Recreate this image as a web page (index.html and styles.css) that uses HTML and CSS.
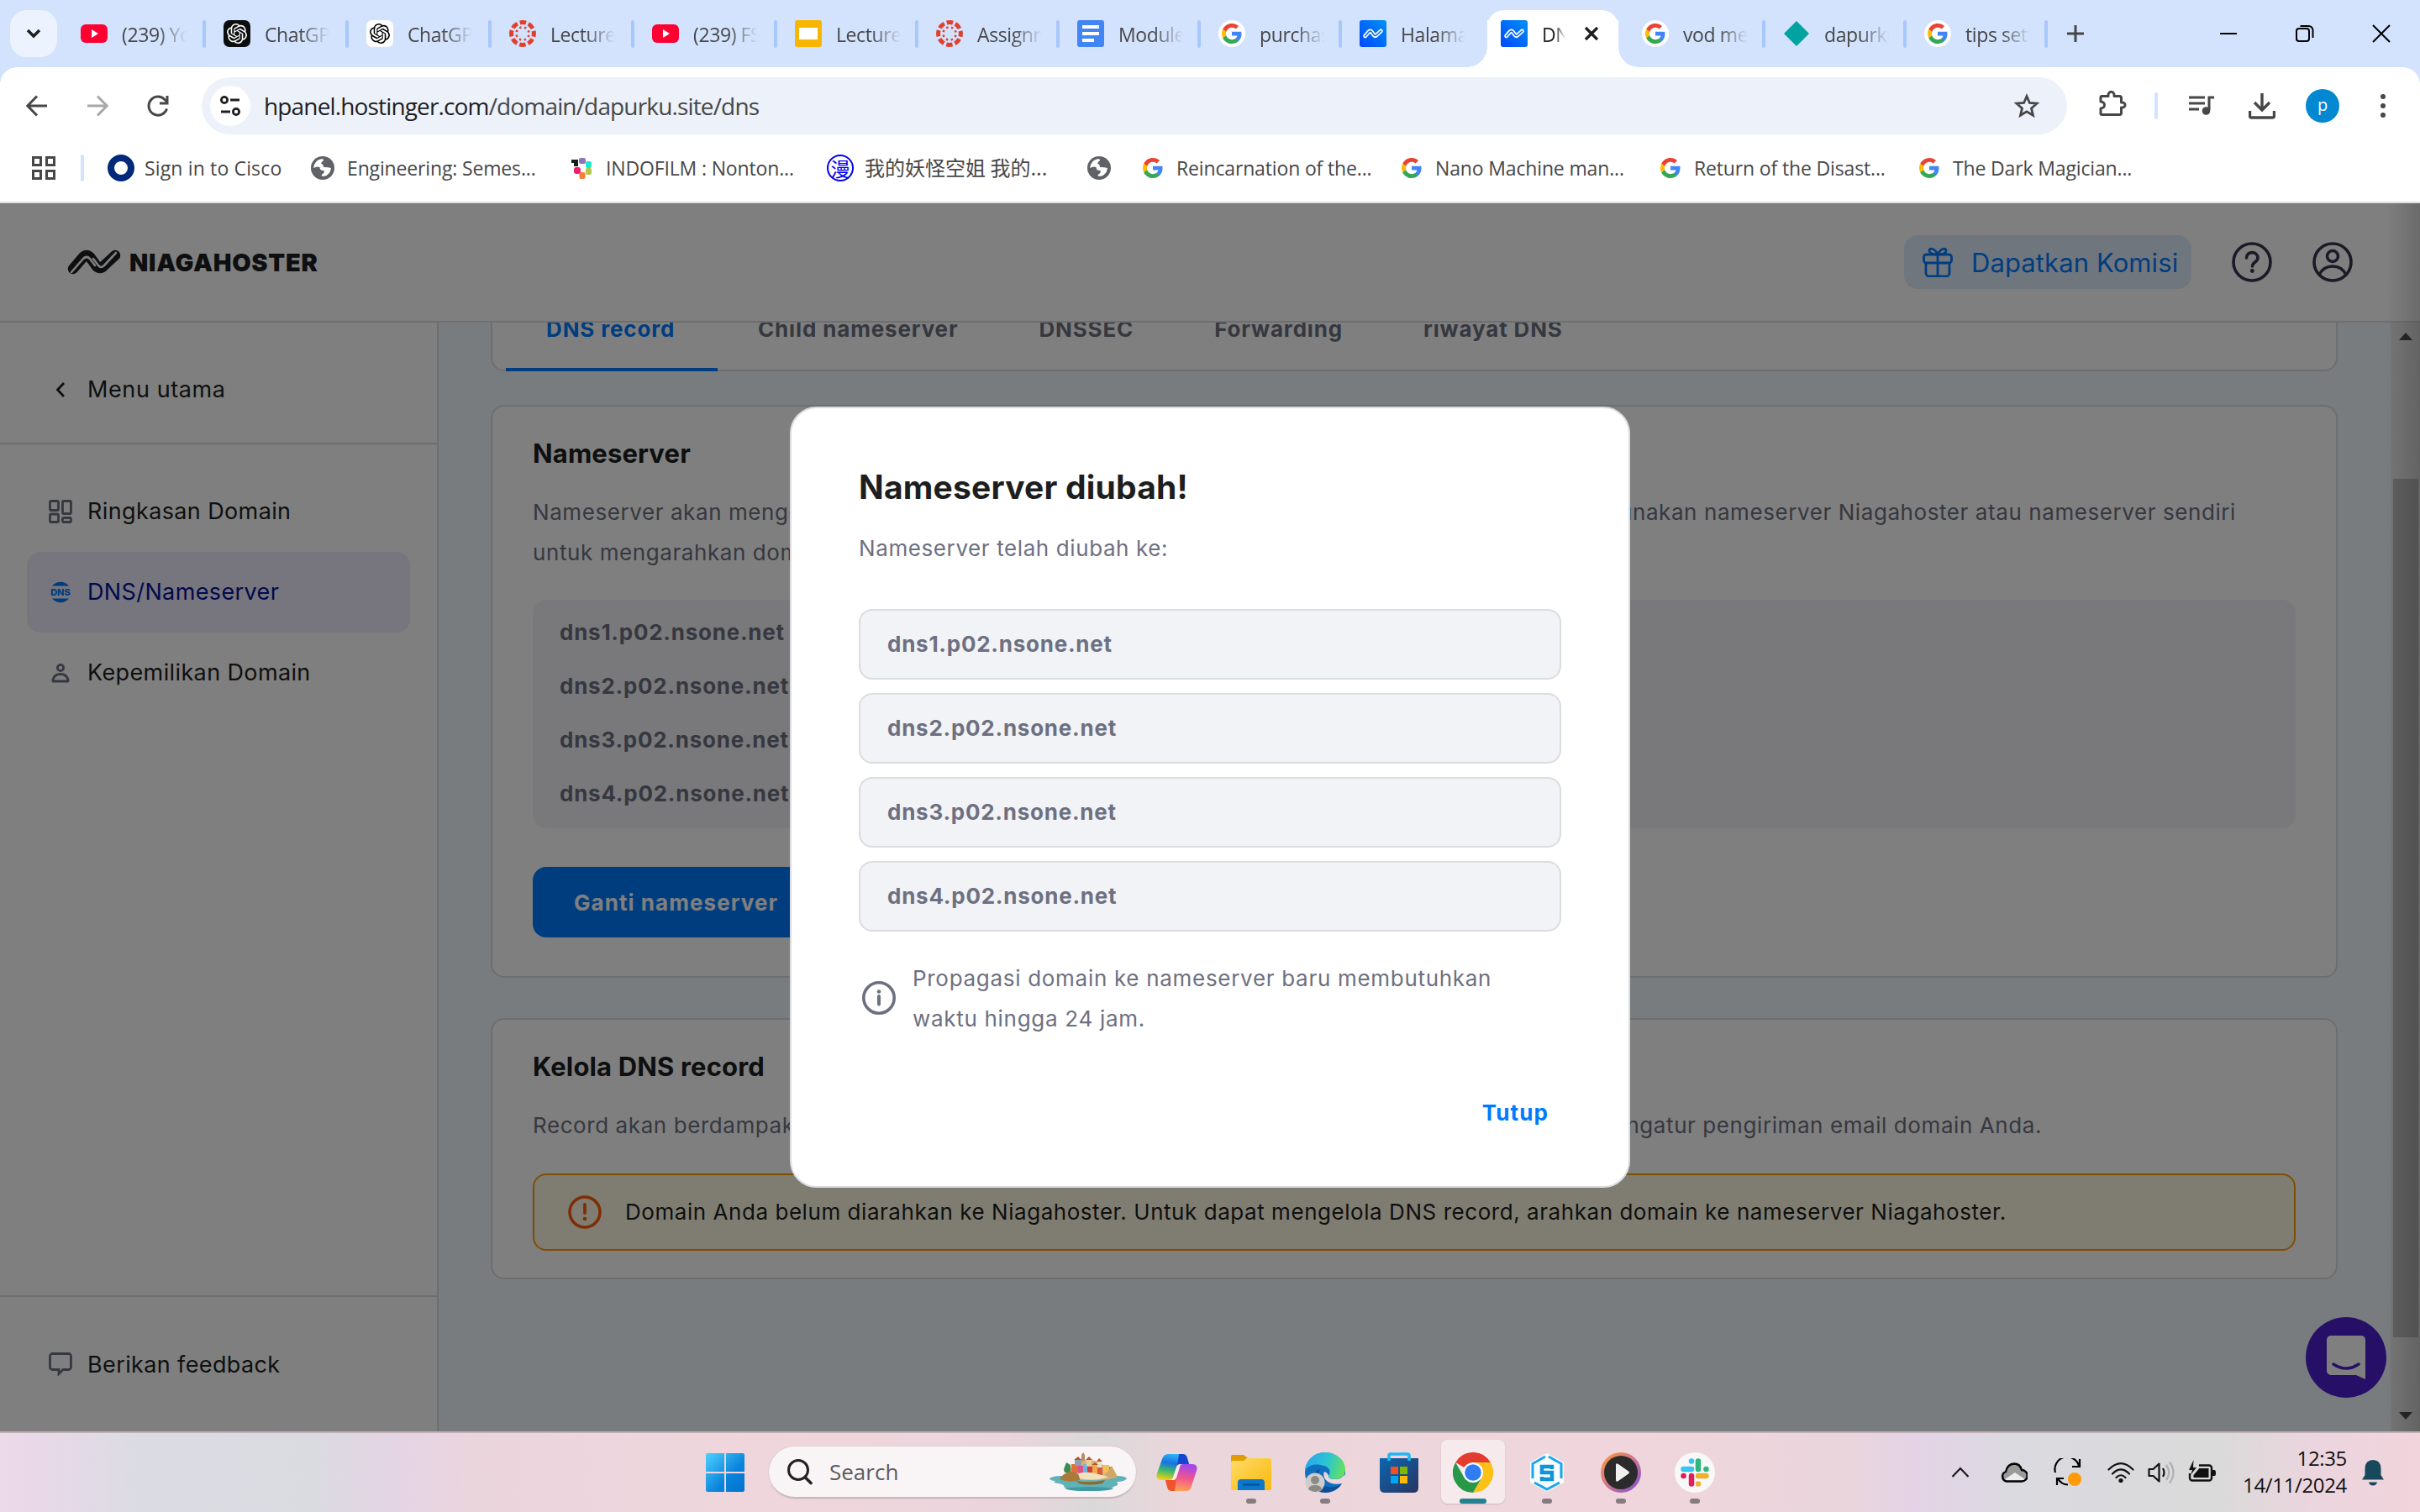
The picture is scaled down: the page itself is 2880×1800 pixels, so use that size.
FILE: index.html
```html
<!DOCTYPE html>
<html lang="id">
<head>
<meta charset="utf-8">
<title>DNS / Nameserver - Niagahoster</title>
<link rel="stylesheet" href="styles.css">
</head>
<body>
<svg class="sprite" aria-hidden="true">
  <defs>
    <linearGradient id="nh-blue" x1="0" y1="1" x2="1" y2="0"><stop offset="0" stop-color="#0048ff"/><stop offset="1" stop-color="#0090f5"/></linearGradient>
    <symbol id="i-youtube" viewBox="0 0 32 32"><rect y="5" width="32" height="22" rx="6" fill="#ff0033"/><path d="M13 11l8 5-8 5z" fill="#fff"/></symbol>
    <symbol id="i-knot" viewBox="0 0 24 24"><path fill="currentColor" d="M22.2819 9.8211a5.9847 5.9847 0 0 0-.5157-4.9108 6.0462 6.0462 0 0 0-6.5098-2.9A6.0651 6.0651 0 0 0 4.9807 4.1818a5.9847 5.9847 0 0 0-3.9977 2.9 6.0462 6.0462 0 0 0 .7427 7.0966 5.98 5.98 0 0 0 .511 4.9107 6.051 6.051 0 0 0 6.5146 2.9001A5.9847 5.9847 0 0 0 13.2599 24a6.0557 6.0557 0 0 0 5.7718-4.2058 5.9894 5.9894 0 0 0 3.9977-2.9001 6.0557 6.0557 0 0 0-.7475-7.0729zm-9.022 12.6081a4.4755 4.4755 0 0 1-2.8764-1.0408l.1419-.0804 4.7783-2.7582a.7948.7948 0 0 0 .3927-.6813v-6.7369l2.02 1.1686a.071.071 0 0 1 .038.052v5.5826a4.504 4.504 0 0 1-4.4945 4.4944zm-9.6607-4.1254a4.4708 4.4708 0 0 1-.5346-3.0137l.142.0852 4.783 2.7582a.7712.7712 0 0 0 .7806 0l5.8428-3.3685v2.3324a.0804.0804 0 0 1-.0332.0615L9.74 19.9502a4.4992 4.4992 0 0 1-6.1408-1.6464zM2.3408 7.8956a4.485 4.485 0 0 1 2.3655-1.9728V11.6a.7664.7664 0 0 0 .3879.6765l5.8144 3.3543-2.0201 1.1685a.0757.0757 0 0 1-.071 0l-4.8303-2.7865A4.504 4.504 0 0 1 2.3408 7.872zm16.5963 3.8558L13.1038 8.364 15.1192 7.2a.0757.0757 0 0 1 .071 0l4.8303 2.7913a4.4944 4.4944 0 0 1-.6765 8.1042v-5.6772a.79.79 0 0 0-.407-.667zm2.0107-3.0231l-.142-.0852-4.7735-2.7818a.7759.7759 0 0 0-.7854 0L9.409 9.2297V6.8974a.0662.0662 0 0 1 .0284-.0615l4.8303-2.7866a4.4992 4.4992 0 0 1 6.6802 4.66zM8.3065 12.863l-2.02-1.1638a.0804.0804 0 0 1-.038-.0567V6.0742a4.4992 4.4992 0 0 1 7.3757-3.4537l-.142.0805L8.704 5.459a.7948.7948 0 0 0-.3927.6813zm1.0976-2.3654l2.602-1.4998 2.6069 1.4998v2.9994l-2.5974 1.4997-2.6067-1.4997Z"/></symbol>
    <symbol id="i-gpt-dark" viewBox="0 0 32 32"><rect width="32" height="32" rx="7" fill="#0c0d0d"/><svg x="4" y="4" width="24" height="24" color="#fff"><use href="#i-knot"/></svg></symbol>
    <symbol id="i-gpt-light" viewBox="0 0 32 32"><rect width="32" height="32" rx="7" fill="#fff"/><svg x="4" y="4" width="24" height="24" color="#000"><use href="#i-knot"/></svg></symbol>
    <symbol id="i-canvas" viewBox="0 0 32 32"><g fill="none" stroke="#e13f2b"><circle cx="16" cy="16" r="13.4" stroke-width="5" stroke-dasharray="7.5 3.02" stroke-dashoffset="3.75"/><circle cx="16" cy="16" r="7.6" stroke-width="2.6" stroke-dasharray="2.4 3.57" stroke-dashoffset="4.2"/></g></symbol>
    <symbol id="i-slides" viewBox="0 0 32 32"><rect width="32" height="32" rx="3" fill="#f8b600"/><rect x="5" y="9" width="22" height="14" fill="#fff"/></symbol>
    <symbol id="i-docs" viewBox="0 0 32 32"><rect width="32" height="32" rx="3" fill="#4285f4"/><path d="M6 6h20v4H6zM6 14h20v4H6zM6 22h14v4H6z" fill="#fff"/></symbol>
    <symbol id="i-g" viewBox="1 1 22 22"><path fill="#4285F4" d="M22.56 12.25c0-.78-.07-1.53-.2-2.25H12v4.26h5.92c-.26 1.37-1.04 2.53-2.21 3.31v2.77h3.57c2.08-1.92 3.28-4.74 3.28-8.09z"/><path fill="#34A853" d="M12 23c2.97 0 5.46-.98 7.28-2.66l-3.57-2.77c-.98.66-2.23 1.06-3.71 1.06-2.86 0-5.29-1.93-6.16-4.53H2.18v2.84C3.99 20.53 7.7 23 12 23z"/><path fill="#FBBC05" d="M5.84 14.09c-.22-.66-.35-1.36-.35-2.09s.13-1.43.35-2.09V7.07H2.18C1.43 8.55 1 10.22 1 12s.43 3.45 1.18 4.93l3.66-2.84z"/><path fill="#EA4335" d="M12 5.38c1.62 0 3.06.56 4.21 1.64l3.15-3.15C17.45 2.09 14.97 1 12 1 7.7 1 3.99 3.47 2.18 7.07l3.66 2.84c.87-2.6 3.3-4.53 6.16-4.53z"/></symbol>
    <symbol id="i-google" viewBox="0 0 32 32"><circle cx="16" cy="16" r="16" fill="#fff"/><svg x="4" y="4" width="24" height="24"><use href="#i-g"/></svg></symbol>
    <symbol id="i-niaga" viewBox="0 0 32 32"><rect width="32" height="32" rx="3" fill="url(#nh-blue)"/><g transform="translate(4 10.300) scale(.375)" fill="none" stroke-linecap="round" stroke-linejoin="round"><path d="M7 23 19 9q4-4 8 0l8 11q4 4 8 0L57 7" stroke="#fff" stroke-width="13"/><path d="M7 23 19 9q4-4 8 0l8 11q4 4 8 0L57 7" stroke="#0069fa" stroke-width="4"/></g></symbol>
    <symbol id="i-diamond" viewBox="0 0 32 32"><path d="M16 1 31 16 16 31 1 16z" fill="#00a3a0"/></symbol>
    <symbol id="i-globe" viewBox="0 0 28 28"><circle cx="14" cy="14" r="14" fill="#5f6368"/><path d="M3 14q1-8 8-10.500 5-1 4 1.500-2 1-3 3.500 3 1 3 4.500 6 0 9 1-1 8-8 9.800-5 .5-2.500-2.600 3-1 2-4.200-5 .5-5-4-3-1.500-7.500 1z" fill="#fff"/><path d="M3 14q3 1 5 4.500 3 1 2 5Q3.500 21 3 14z" fill="#5f6368"/></symbol>
    <symbol id="i-smile-doc" viewBox="0 0 48 52"><path d="M6 0h36a5 5 0 0 1 5 5v47l-11-5H6a5 5 0 0 1-5-5V5a5 5 0 0 1 5-5z" fill="#fff"/><path d="M9 34q15 10 30 0" fill="none" stroke="#4c20cf" stroke-width="3.500" stroke-linecap="round"/></symbol>
  </defs>
</svg>

<header class="browser">
  <div class="tabstrip">
    <button class="tab-search" aria-label="Cari tab"><svg width="18" height="12" viewBox="0 0 18 12"><path d="M2 2l7 7 7-7" fill="none" stroke="#1f1f1f" stroke-width="3.500"/></svg></button>
    <div class="tabs">
      <div class="tab"><svg class="fav"><use href="#i-youtube"/></svg><span>(239) You</span></div>
      <div class="tab"><svg class="fav"><use href="#i-gpt-dark"/></svg><span>ChatGPT</span></div>
      <div class="tab"><svg class="fav"><use href="#i-gpt-light"/></svg><span>ChatGPT</span></div>
      <div class="tab"><svg class="fav"><use href="#i-canvas"/></svg><span>Lecture</span></div>
      <div class="tab"><svg class="fav"><use href="#i-youtube"/></svg><span>(239) FSO</span></div>
      <div class="tab slim"><svg class="fav"><use href="#i-slides"/></svg><span>Lecture</span></div>
      <div class="tab slim"><svg class="fav"><use href="#i-canvas"/></svg><span>Assignm</span></div>
      <div class="tab slim"><svg class="fav"><use href="#i-docs"/></svg><span>Module</span></div>
      <div class="tab slim"><svg class="fav"><use href="#i-google"/></svg><span>purchas</span></div>
      <div class="tab slim last"><svg class="fav"><use href="#i-niaga"/></svg><span>Halama</span></div>
      <div class="tab slim active"><svg class="fav"><use href="#i-niaga"/></svg><span>DNS</span><svg class="close" width="18" height="18" viewBox="0 0 18 18"><path d="M2 2l14 14M16 2 2 16" stroke="#1f1f1f" stroke-width="3.200"/></svg></div>
      <div class="tab slim"><svg class="fav"><use href="#i-google"/></svg><span>vod mem</span></div>
      <div class="tab slim"><svg class="fav"><use href="#i-diamond"/></svg><span>dapurku</span></div>
      <div class="tab slim"><svg class="fav"><use href="#i-google"/></svg><span>tips sett</span></div>
    </div>
    <svg class="new-tab" width="22" height="22" viewBox="0 0 22 22"><path d="M11 1v20M1 11h20" stroke="#474747" stroke-width="3"/></svg>
    <div class="window-buttons">
      <svg viewBox="0 0 24 24"><path d="M2 12h20" stroke="#000" stroke-width="2"/></svg>
      <svg viewBox="0 0 24 24"><rect x="2" y="6" width="15" height="15" rx="3" fill="none" stroke="#000" stroke-width="2"/><path d="M6.500 3h10a5 5 0 0 1 5 5v9" fill="none" stroke="#000" stroke-width="2"/></svg>
      <svg viewBox="0 0 24 24"><path d="M2 2l20 20M22 2 2 22" stroke="#000" stroke-width="2"/></svg>
    </div>
  </div>

  <div class="toolbar">
    <div class="nav">
      <svg viewBox="0 0 32 32"><path d="M28 16H5M16 4.500 4.800 16 16 27.500" fill="none" stroke="#474747" stroke-width="3"/></svg>
      <svg viewBox="0 0 32 32"><path d="M4 16h23M16 4.500 27.200 16 16 27.500" fill="none" stroke="#a8a8a8" stroke-width="3"/></svg>
      <svg viewBox="0 0 32 32"><path d="M26.500 19.500A11 11 0 1 1 24 8.500l3 3" fill="none" stroke="#474747" stroke-width="3"/><path d="M27 4v9h-9" fill="none" stroke="#474747" stroke-width="3"/></svg>
    </div>
    <div class="omnibox">
      <span class="site-info"><svg width="26" height="26" viewBox="0 0 26 26"><g fill="none" stroke="#1f1f1f" stroke-width="2.800"><circle cx="6" cy="6" r="3.600"/><path d="M13 6h11M2 20h11"/><circle cx="20" cy="20" r="3.600"/></g></svg></span>
      <p class="url"><b>hpanel.hostinger.com</b>/domain/dapurku.site/dns</p>
      <svg class="star" width="32" height="32" viewBox="0 0 32 32"><path d="M16 4.500l3.400 8 8.600.700-6.500 5.700 2 8.400L16 22.800l-7.500 4.500 2-8.400L4 13.200l8.600-.7z" fill="none" stroke="#474747" stroke-width="2.800"/></svg>
    </div>
    <div class="tools">
      <svg class="ext" viewBox="0 0 36 36"><path d="M6.500 9.500h7.500c-1-7 8-7 7 0h6.500a2 2 0 0 1 2 2V17c6-1 6 7 0 6v6.500a2 2 0 0 1-2 2H6.500a1.500 1.500 0 0 1-1.500-1.500V24c6 0 6-8 0-8v-5a1.500 1.500 0 0 1 1.500-1.500z" fill="none" stroke="#474747" stroke-width="3" stroke-linejoin="round"/></svg>
      <i class="rule"></i>
      <span><svg viewBox="0 0 32 32"><path d="M1 6h19M1 13h19M1 20h12" stroke="#474747" stroke-width="3"/><path d="M31 6h-6v15" fill="none" stroke="#474747" stroke-width="3"/><circle cx="21.500" cy="22" r="4.800" fill="#474747"/></svg></span>
      <span><svg viewBox="0 0 32 32"><path d="M16 1v19M7 12l9 9 9-9M1.500 22v6a2 2 0 0 0 2 2h25a2 2 0 0 0 2-2v-6" fill="none" stroke="#474747" stroke-width="3.400"/></svg></span>
      <span><b class="avatar">p</b></span>
      <span><svg viewBox="0 0 32 32"><g fill="#474747"><circle cx="16" cy="5" r="3"/><circle cx="16" cy="16" r="3"/><circle cx="16" cy="27" r="3"/></g></svg></span>
    </div>
  </div>

  <nav class="bookmarks">
    <svg class="apps" viewBox="0 0 28 28"><path d="M1.500 1.500h9v9h-9zM17.500 1.500h9v9h-9zM1.500 17.500h9v9h-9zM17.500 17.500h9v9h-9z" fill="none" stroke="#474747" stroke-width="3"/></svg>
    <i class="rule"></i>
    <a class="bm cisco"><svg class="i32" viewBox="0 0 32 32"><circle cx="16" cy="16" r="12" fill="#fff" stroke="#00297a" stroke-width="8"/></svg><span>Sign in to Cisco</span></a>
    <a class="bm"><svg class="i28"><use href="#i-globe"/></svg><span>Engineering: Semes...</span></a>
    <a class="bm"><svg class="i28" viewBox="0 0 28 28"><path d="M2 4h8v8H5V8H2z" fill="#1b1b1b"/><rect x="11" y="2" width="8" height="7" rx="2" fill="#8e75b5"/><rect x="19" y="6" width="7" height="8" rx="2" fill="#22e6cf"/><rect x="5" y="13" width="8" height="8" rx="3" fill="#ef1c72"/><rect x="19" y="14" width="7" height="8" rx="2" fill="#b3c846"/><rect x="11.500" y="19" width="7" height="8" rx="2" fill="#fb7b38"/></svg><span>INDOFILM : Nonton...</span></a>
    <a class="bm"><b class="man i32">漫</b><span class="cjk">我的妖怪空姐 我的...</span></a>
    <a class="bm"><svg class="i28"><use href="#i-globe"/></svg></a>
    <a class="bm"><svg class="i24"><use href="#i-g"/></svg><span>Reincarnation of the...</span></a>
    <a class="bm"><svg class="i24"><use href="#i-g"/></svg><span>Nano Machine man...</span></a>
    <a class="bm"><svg class="i24"><use href="#i-g"/></svg><span>Return of the Disast...</span></a>
    <a class="bm"><svg class="i24"><use href="#i-g"/></svg><span>The Dark Magician...</span></a>
  </nav>
</header>

<div class="page">
  <div class="topbar">
    <div class="brand">
      <svg width="64" height="30" viewBox="0 0 64 30"><g fill="none" stroke-linecap="round" stroke-linejoin="round"><path d="M7 23 19 9q4-4 8 0l8 11q4 4 8 0L57 7" stroke="#1d1e20" stroke-width="12.500"/><path d="M5 27 19 11q4-4 8 0l6 8M31 11l6 8q3 4 7 0L58 4" stroke="#fff" stroke-width="2.600"/></g></svg>
      <span>NIAGAHOSTER</span>
    </div>
    <div class="account">
      <a class="komisi"><svg width="36" height="36" viewBox="0 0 36 36"><g fill="none" stroke="#007bff" stroke-width="2.800"><rect x="1.500" y="9" width="33" height="10" rx="3"/><path d="M4 19v12a4 4 0 0 0 4 4h20a4 4 0 0 0 4-4V19M18 9v26M18 9C14 9 8 8 8 4.500S14 .5 18 9c4-8.500 10-8 10-4.500S22 9 18 9z"/></g></svg><span>Dapatkan Komisi</span></a>
      <svg class="round" viewBox="0 0 48 48"><circle cx="24" cy="24" r="22" fill="none" stroke="#36344d" stroke-width="3.600"/><path d="M17.500 19c0-9 13.500-8 13.500 0 0 5-6.500 5-6.500 10" fill="none" stroke="#36344d" stroke-width="3.600" stroke-linecap="round"/><circle cx="24.300" cy="34.500" r="2.400" fill="#36344d"/></svg>
      <svg class="round" viewBox="0 0 48 48"><g fill="none" stroke="#36344d" stroke-width="3.600"><circle cx="24" cy="24" r="22"/><circle cx="24" cy="17" r="6.500"/><path d="M8 39q5-10 16-10t16 10"/></g></svg>
    </div>
  </div>

  <div class="body">
    <aside class="sidebar">
      <a class="back"><svg width="16" height="20" viewBox="0 0 16 20"><path d="M12 2 4.500 10 12 18" fill="none" stroke="#1d1e20" stroke-width="2.800"/></svg><span>Menu utama</span></a>
      <nav class="menu">
        <a><svg viewBox="0 0 28 28"><g fill="none" stroke="#6d7081" stroke-width="2.800"><rect x="1.500" y="1.500" width="10" height="11" rx="1.500"/><rect x="16.500" y="1.500" width="10" height="15" rx="1.500"/><rect x="1.500" y="17" width="10" height="9.500" rx="1.500"/><rect x="16.500" y="21.500" width="10" height="5" rx="1.500"/></g></svg><span>Ringkasan Domain</span></a>
        <a class="current"><svg viewBox="0 0 28 28"><path d="M4 6.500a13 13 0 0 1 20 0zM4 21.500a13 13 0 0 0 20 0z" fill="#007bff"/><text x="14" y="18.300" text-anchor="middle" class="dns-glyph">DNS</text></svg><span>DNS/Nameserver</span></a>
        <a><svg viewBox="0 0 28 28"><g fill="none" stroke="#6d7081" stroke-width="2.800"><circle cx="14" cy="8" r="3.600"/><path d="M5 24v-2q2-6.500 9-6.500t9 6.500v2z" stroke-linejoin="round"/></g></svg><span>Kepemilikan Domain</span></a>
      </nav>
      <a class="feedback"><svg viewBox="0 0 28 28"><path d="M4.500 1.500h19a3 3 0 0 1 3 3v13a3 3 0 0 1-3 3H17l-5 5v-5H4.500a3 3 0 0 1-3-3v-13a3 3 0 0 1 3-3z" fill="none" stroke="#6d7081" stroke-width="2.800"/></svg><span>Berikan feedback</span></a>
    </aside>

    <main class="content">
      <div class="card subtabs">
        <a class="on">DNS record</a><a>Child nameserver</a><a>DNSSEC</a><a>Forwarding</a><a>riwayat DNS</a>
      </div>

      <section class="card ns">
        <h2>Nameserver</h2>
        <div class="para">
          <p class="spread"><span>Nameserver akan mengelola arah domain.</span><span>Anda dapat menggunakan nameserver Niagahoster atau nameserver sendiri</span></p>
          <p>untuk mengarahkan domain Anda.</p>
        </div>
        <ul class="ns-list"><li>dns1.p02.nsone.net</li><li>dns2.p02.nsone.net</li><li>dns3.p02.nsone.net</li><li>dns4.p02.nsone.net</li></ul>
        <button class="primary">Ganti nameserver</button>
      </section>

      <section class="card records">
        <h2>Kelola DNS record</h2>
        <div class="para one"><p class="spread"><span>Record akan berdampak pada cara kerja domain, misalnya</span><span>mengatur pengiriman email domain Anda.</span></p></div>
        <div class="alert"><svg width="40" height="40" viewBox="0 0 40 40"><circle cx="20" cy="20" r="18" fill="none" stroke="#fc5b0a" stroke-width="3.600"/><path d="M20 11v10" stroke="#fc5b0a" stroke-width="3.800" stroke-linecap="round"/><circle cx="20" cy="28" r="2.300" fill="#fc5b0a"/></svg><p>Domain Anda belum diarahkan ke Niagahoster. Untuk dapat mengelola DNS record, arahkan domain ke nameserver Niagahoster.</p></div>
      </section>
    </main>

    <div class="scrollbar">
      <svg width="16" height="9" viewBox="0 0 16 9"><path d="M8 0l8 9H0z" fill="#505050"/></svg>
      <i class="thumb"></i>
      <svg width="16" height="9" viewBox="0 0 16 9"><path d="M8 9l8-9H0z" fill="#505050"/></svg>
    </div>
  </div>

  <div class="chat"><svg width="48" height="52"><use href="#i-smile-doc"/></svg></div>

  <div class="overlay">
    <div class="modal">
      <h1>Nameserver diubah!</h1>
      <p class="sub">Nameserver telah diubah ke:</p>
      <ul class="fields"><li>dns1.p02.nsone.net</li><li>dns2.p02.nsone.net</li><li>dns3.p02.nsone.net</li><li>dns4.p02.nsone.net</li></ul>
      <div class="note"><svg width="48" height="48" viewBox="0 0 48 48"><circle cx="24" cy="24" r="18.200" fill="none" stroke="#6d7081" stroke-width="3.600"/><path d="M24 22v9.500" stroke="#6d7081" stroke-width="4" stroke-linecap="round"/><circle cx="24" cy="16.500" r="2.300" fill="#6d7081"/></svg><p>Propagasi domain ke nameserver baru membutuhkan<br>waktu hingga 24 jam.</p></div>
      <div class="actions"><button class="text-button">Tutup</button></div>
    </div>
  </div>
</div>

<footer class="taskbar">
  <div class="dock">
    <svg class="win" width="46" height="46" viewBox="0 0 46 46"><defs><linearGradient id="w11" x1="0" y1="0" x2="1" y2="1"><stop offset="0" stop-color="#4fd0ff"/><stop offset=".6" stop-color="#0a84dc"/><stop offset="1" stop-color="#0073d0"/></linearGradient></defs><path d="M2 0h20v22H0V2a2 2 0 0 1 2-2zM24 0h20a2 2 0 0 1 2 2v20H24zM0 24h22v22H2a2 2 0 0 1-2-2zM24 24h22v20a2 2 0 0 1-2 2H24z" fill="url(#w11)"/></svg>
    <div class="search">
      <svg width="32" height="32" viewBox="0 0 32 32"><circle cx="14" cy="14" r="11.500" fill="none" stroke="#222" stroke-width="3"/><path d="M22 22.500l7 7" stroke="#222" stroke-width="3.600" stroke-linecap="round"/></svg>
      <span>Search</span>
      <svg class="isle" width="92" height="46" viewBox="0 0 92 46"><path d="M0 31q4-3 14-3h66q10 0 12 3-2 4-12 4 4 4-4 6-3 5-28 5t-31-5q2-2-6-4-8-1-4-3-6 0-7-3z" fill="#5fb3b8"/><path d="M18 43q28-4 58 0-3 3-28 3t-30-3z" fill="#3f98a2"/><path d="M20 29q-2-8 8-13 8-8 18-7 14 0 19 8 6-2 8 4 6 3 7 9-16 4-32 3-20 1-28-4z" fill="#d9b47a"/><path d="M17 20l3-8 5 3v9h-7zM70 20q2-6 4 0v4h-5z" fill="#3e8a50"/><rect x="26" y="14" width="8" height="10" fill="#e0703c"/><rect x="30" y="8" width="8" height="8" fill="#8d9fb0"/><rect x="34" y="16" width="6" height="9" fill="#d8538b"/><rect x="40" y="14" width="5" height="12" fill="#6db6dc"/><rect x="45" y="17" width="6" height="10" fill="#cf3e3e"/><rect x="44" y="8" width="6" height="8" fill="#e9cf9f"/><rect x="51" y="14" width="6" height="12" fill="#f0a94b"/><rect x="57" y="10" width="5" height="8" fill="#e9e0d0"/><rect x="57" y="18" width="6" height="9" fill="#d85c3c"/><rect x="64" y="15" width="7" height="9" fill="#f2c057"/><path d="M38 10V3l2-3 2 3v7z" fill="#b98a63"/><path d="M29 9l5-4 4 4M43 9l4-4 4 4M50 15l4-3 4 3M56 11l3-4 4 4" fill="#b05a2c"/><path d="M12 32q5-9 16-9 9 2 8 10-12 4-24-1z" fill="#a87a3c"/><path d="M66 28l8-12 7 13q-8 4-15-1z" fill="#d2a765"/><path d="M34 25q14-3 24 1l12 3q-16 6-34 2z" fill="#f3e0bc"/><path d="M32 34q16 3 34-1l-3 4q-16 3-28 0z" fill="#93682f"/></svg>
    </div>
    <div class="app"><svg width="50" height="46" viewBox="0 0 50 46"><defs><linearGradient id="cp1" x1=".5" y1="0" x2=".3" y2="1"><stop offset="0" stop-color="#2eb4f5"/><stop offset=".35" stop-color="#1673e0"/><stop offset=".65" stop-color="#3fb96c"/><stop offset="1" stop-color="#f2d312"/></linearGradient><linearGradient id="cp2" x1=".6" y1="0" x2=".4" y2="1"><stop offset="0" stop-color="#a046f0"/><stop offset=".5" stop-color="#f0568e"/><stop offset="1" stop-color="#ffa552"/></linearGradient></defs><path d="M14 1h17q5 0 6 5l2 7H29q-4 0-5 4l-4 12q-1 3-4 3H6q-7 0-5-8L7 7q2-6 7-6z" fill="url(#cp1)"/><path d="M27 1h4q5 0 6 5l2 7H29q-3 0-4 2z" fill="#1646cf"/><path d="M36 45H19q-5 0-6-5l-2-8h9q3 0 4-3l4-13q1-3 4-3h11q7 0 5 8l-6 18q-1 6-6 6z" fill="url(#cp2)"/><path d="M22 45h-3q-5 0-6-5l-2-8h9q3 0 4-3z" fill="#f0532d"/><path d="M24 29l5-16q-4 0-5 4l-4 12q-1 3-4 3h4q3 0 4-3z" fill="#fbe9f0"/></svg></div>
    <div class="app run"><svg width="48" height="44" viewBox="0 0 48 44"><defs><linearGradient id="fo" x1="0" y1="0" x2="1" y2="1"><stop offset="0" stop-color="#ffdc66"/><stop offset="1" stop-color="#f9b80d"/></linearGradient></defs><path d="M2 1h13l5 4h-1v10H0V3q0-2 2-2z" fill="#e09d00"/><path d="M2 8h13l4-3h27q2 0 2 2v34q0 2-2 2H2q-2 0-2-2V10q0-2 2-2z" fill="url(#fo)"/><path d="M8 43V34q0-4 4-4h24q4 0 4 4v9z" fill="#0b78cc"/><path d="M14 36.500h20" stroke="#0a5195" stroke-width="2.400"/></svg></div>
    <div class="app run"><svg width="48" height="48" viewBox="0 0 48 48"><defs><linearGradient id="ed" x1="0" y1=".3" x2="1" y2=".5"><stop offset="0" stop-color="#2aa5ee"/><stop offset=".55" stop-color="#2cc6d0"/><stop offset="1" stop-color="#66e05e"/></linearGradient></defs><circle cx="24" cy="24" r="24" fill="#0f6fc0"/><path d="M0 22C1 9 11 0 24 0s24 9 24 20c0 8-6 12-13 12-5 0-8-2-7-4 3-4 2-10-5-12C14 13 4 14 0 22z" fill="url(#ed)"/><path d="M17 30c1 9 10 13 18 11 4-1 7-2 9-4-4 7-12 11-20 11-10 0-16-9-14-18 1-5 4-9 8-10-2 3-2 6-1 10z" fill="#0f4f96"/><path d="M28 28c-1 2 2 4 7 4 5 0 9-1 12-6l2 6-4 5q-14 3-21-5-3-5-1-9 4 1 5 5z" fill="#edd6dc"/><circle cx="12" cy="36" r="11.500" fill="#cfcdca"/><circle cx="12" cy="33" r="5" fill="#8c8a87"/><path d="M4 44q1-5 8-5t8 5q-8 6-16 0z" fill="#8c8a87"/></svg></div>
    <div class="app"><svg width="46" height="48" viewBox="0 0 46 48"><defs><linearGradient id="st" x1="0" y1="0" x2="1" y2="1"><stop offset="0" stop-color="#0c66b2"/><stop offset="1" stop-color="#29355f"/></linearGradient></defs><path d="M0 7h46v35q0 6-6 6H6q-6 0-6-6z" fill="url(#st)"/><path d="M11 10V4q0-2 2-2h20q2 0 2 2v6" fill="none" stroke="#1fb8f2" stroke-width="3.600"/><path d="M13 17h9v9h-9z" fill="#f25022"/><path d="M24 17h9v9h-9z" fill="#7fba00"/><path d="M13 28h9v9h-9z" fill="#00a4ef"/><path d="M24 28h9v9h-9z" fill="#ffb900"/></svg></div>
    <div class="app run focus"><svg width="48" height="48" viewBox="0 0 48 48"><path d="M24 24 3.200 12A24 24 0 0 1 44.800 12z" fill="#e33b2e"/><path d="M44.800 12A24 24 0 0 1 24 48l10.400-18L24 12z" fill="#fbc116"/><path d="M3.200 12A24 24 0 0 0 24 48l10.400-18-10.400 6-10.400-6z" fill="#279847"/><circle cx="24" cy="24" r="12" fill="#fff"/><circle cx="24" cy="24" r="9.800" fill="#2f7df0"/></svg></div>
    <div class="app run"><svg width="42" height="46" viewBox="0 0 42 46"><path d="M21 0l20 11v24L21 46 1 35V11z" fill="#f8fdff"/><path d="M19 4 4 12.500V30M23 4l15 8.500V30M6 35l15 8 15-8" fill="none" stroke="#1ba6ea" stroke-width="3"/><path d="M27 19v-3H15v7h12v8H15v-3" fill="none" stroke="#1393d8" stroke-width="4.500"/></svg></div>
    <div class="app run"><svg width="48" height="48" viewBox="0 0 48 48"><defs><linearGradient id="mp" x1="0" y1="0" x2="1" y2="1"><stop offset="0" stop-color="#ff9a33"/><stop offset=".5" stop-color="#cf7490"/><stop offset="1" stop-color="#7b4fd0"/></linearGradient></defs><circle cx="24" cy="24" r="24" fill="url(#mp)"/><circle cx="24" cy="24" r="20" fill="#2b2b2b"/><path d="M18 15q0-3 3-1l12 8.500q2 1.500 0 3L21 34q-3 2-3-1z" fill="#f0f0f0"/></svg></div>
    <div class="app run"><svg width="48" height="48" viewBox="0 0 48 48"><circle cx="24" cy="24" r="24" fill="#f8f8f8"/><g stroke-width="6.500" stroke-linecap="round"><path d="M20 10.500v.1M10.500 20h9.500" stroke="#36c5f0"/><path d="M28 10.500V20M37.500 20h-.1" stroke="#2eb67d"/><path d="M28 37.500v-.1M28 28h9.500" stroke="#ecb22e"/><path d="M20 28v9.500M10.500 28h.1" stroke="#e01e5a"/></g></svg></div>
  </div>

  <div class="tray">
    <svg class="chev" width="22" height="14" viewBox="0 0 22 14"><path d="M1.500 12 11 2l9.500 10" fill="none" stroke="#1b1b1b" stroke-width="2.200"/></svg>
    <svg class="cloud" width="32" height="24" viewBox="0 0 32 24"><path d="M7 22.500a6 6 0 0 1-1-11.500Q8 2 16 1.500q7 0 9 7.500a6.700 6.700 0 0 1 0 13.500z" fill="#9a9a9a"/><path d="M5 20l12-8 12 8-2 2.500H7z" fill="#ededed"/><path d="M7 22.500a6 6 0 0 1-1-11.500Q8 2 16 1.500q7 0 9 7.500a6.700 6.700 0 0 1 0 13.500z" fill="none" stroke="#000" stroke-width="2.400"/></svg>
    <svg class="sync" width="34" height="34" viewBox="0 0 34 34"><path d="M2 17A14.500 14.500 0 0 1 30 9M31 1v9h-9M17 31.500A14 14 0 0 1 5 24M4 32v-8h8" fill="none" stroke="#000" stroke-width="2.200"/><circle cx="25" cy="25" r="8" fill="#ff9a0a"/></svg>
    <svg class="wifi" width="32" height="26" viewBox="0 0 32 26"><g fill="none" stroke="#111" stroke-width="2.200" stroke-linecap="round"><path d="M1.500 9.500q14.500-14.500 29 0M6 14.500q10-10 20 0M10.500 19q5.500-5.500 11 0"/></g><circle cx="16" cy="22.500" r="2.600" fill="#111"/></svg>
    <svg class="vol" width="34" height="28" viewBox="0 0 34 28"><path d="M1.500 10v8h5l7 6.500v-21L6.500 10z" fill="none" stroke="#111" stroke-width="2.200" stroke-linejoin="round"/><path d="M18 9q3 5 0 10" fill="none" stroke="#111" stroke-width="2.200"/><path d="M22 5q6.500 9 0 18M26 1.500q9 12.500 0 25" fill="none" stroke="#b0b0b0" stroke-width="2.200"/></svg>
    <svg class="bat" width="34" height="28" viewBox="0 0 34 28"><path d="M13 7.500h12a3 3 0 0 1 3 3v12a3 3 0 0 1-3 3H5a3 3 0 0 1-3-3V17" fill="none" stroke="#111" stroke-width="2.400"/><path d="M13 11h11.500v11h-18V19l6-7zM29 13h2.500q1.500 0 1.500 3.500T31.500 20H29zM6.500 1 1 13h4l-2 6 7-9H6z" fill="#111"/></svg>
    <p class="clock">12:35<br>14/11/2024</p>
    <svg class="bell" width="26" height="32" viewBox="0 0 26 32"><path d="M13 1q9 0 9.500 10v8l3.500 5.500H0L3.500 19v-8Q4 1 13 1zM8 27.500h10q-1 4-5 4t-5-4z" fill="#17495c"/></svg>
  </div>
</footer>
</body>
</html>
```
FILE: styles.css
```css
* { box-sizing: border-box; margin: 0; padding: 0; }
body { width: 2880px; height: 1800px; overflow: hidden; display: flex; flex-direction: column; font-family: Inter, "Liberation Sans", sans-serif; font-size: 26px; color: #1d1e20; background: #fff; }
svg { display: block; flex: none; }
ul { list-style: none; }
button { border: 0; background: none; font: inherit; color: inherit; }
span, p, h1, h2, li, a { white-space: nowrap; }
.sprite { position: absolute; width: 0; height: 0; }

/* Browser chrome */
.browser { height: 242px; flex: none; background: #fff; border-bottom: 2px solid #dedfe0; font-family: "Open Sans", "Noto Sans CJK SC", sans-serif; color: #474747; }
.tabstrip { height: 80px; background: #d3e3fd; display: flex; align-items: center; padding-left: 12px; }
.tab-search { width: 56px; height: 56px; border-radius: 20px; background: #edf3fe; display: grid; place-items: center; margin-right: 8px; }
.tabs { display: flex; height: 80px; }
.tab { width: 170px; padding-left: 20px; display: flex; align-items: center; position: relative; }
.tab.slim { width: 168px; }
.tab .fav { width: 32px; height: 32px; }
.tab span { margin-left: 17px; padding-top: 1px; width: 77px; overflow: hidden; font-size: 23px; letter-spacing: -.4px; -webkit-mask-image: linear-gradient(90deg, #000 55%, transparent); mask-image: linear-gradient(90deg, #000 55%, transparent); }
.tab::after { content: ""; position: absolute; right: 1px; top: 24px; width: 4px; height: 33px; border-radius: 2px; background: #a8c7fa; }
.tab.last::after, .tab.active::after { display: none; }
.tab.active { color: #1f1f1f; z-index: 1; background: linear-gradient(#fff, #fff) 4px 24px / 156px 56px no-repeat; }
.tab.active::before { content: ""; position: absolute; z-index: -1; left: -20px; right: -16px; top: 56px; bottom: 0; background: radial-gradient(circle at 0 0, transparent 23.5px, #fff 24px) 0 0 / 24px 24px no-repeat, radial-gradient(circle at 100% 0, transparent 23.5px, #fff 24px) 100% 0 / 24px 24px no-repeat; }
.tab.active::after { display: block; z-index: -1; left: 4px; right: auto; top: 12px; width: 156px; height: 60px; border-radius: 20px 20px 0 0; background: #fff; }
.tab.active span { width: 28px; }
.tab.active .close { margin-left: 22px; }
.new-tab { margin-left: 21px; }
.window-buttons { margin-left: auto; display: flex; gap: 67px; padding-right: 34px; }
.window-buttons svg { width: 24px; height: 24px; }
.toolbar { height: 92px; display: flex; align-items: center; padding-left: 28px; background: radial-gradient(circle at 100% 100%, #fff 19.5px, #d3e3fd 20px) 0 0 / 20px 20px no-repeat, radial-gradient(circle at 0 100%, #fff 19.5px, #d3e3fd 20px) 100% 0 / 20px 20px no-repeat; }
.nav { display: flex; gap: 40px; }
.nav svg { width: 32px; height: 32px; }
.omnibox { margin-left: 36px; width: 2220px; height: 68px; border-radius: 34px; background: #ecf1fa; display: flex; align-items: center; padding: 0 32px 0 10px; }
.site-info { width: 48px; height: 48px; border-radius: 50%; background: #fff; display: grid; place-items: center; }
.url { margin-left: 16px; font-size: 28px; letter-spacing: -.85px; }
.url b { font-weight: 400; color: #1f1f1f; }
.star { margin-left: auto; }
.tools { display: flex; align-items: center; }
.tools span { width: 72px; display: grid; place-items: center; }
.tools span svg { width: 32px; height: 32px; }
.tools .ext { width: 36px; height: 36px; margin: -6px 33px 0 35px; }
.rule { width: 4px; height: 32px; border-radius: 2px; background: #d3e3fd; }
.tools .rule { margin-right: 16px; }
.avatar { width: 40px; height: 40px; border-radius: 50%; background: #0288d1; color: #fff; font-weight: 400; font-size: 20px; text-align: center; line-height: 37px; }
.bookmarks { height: 56px; display: grid; grid-template-columns: 58px 32px 242px 308px 306px 310px 66px 308px 308px 308px 308px; align-items: center; padding-left: 38px; font-size: 23px; letter-spacing: -.15px; }
.apps { width: 28px; height: 28px; }
.bm { display: flex; align-items: center; gap: 12px; }
.bm span { margin-top: -1px; }
.cisco { letter-spacing: .15px; }
.i32 { width: 32px; height: 32px; }
.i28 { width: 28px; height: 28px; }
.i28 + span { margin-left: 3px; }
.i24 { width: 24px; height: 24px; }
.i24 + span { margin-left: 4px; }
.man { border: 2px solid #0000f0; border-radius: 50%; color: #0000f0; font: 400 23px/27px "Noto Sans CJK SC", sans-serif; display: grid; place-items: center; }
.bm .cjk { font-family: "Noto Sans CJK SC", sans-serif; letter-spacing: 0; margin-left: 1px; font-size: 24px; margin-top: -3px; }

/* hPanel */
.page { height: 1462px; flex: none; position: relative; display: flex; flex-direction: column; background: #fff; overflow: hidden; }
.topbar { height: 142px; flex: none; border-bottom: 2px solid #dadce0; display: flex; align-items: center; justify-content: space-between; padding: 0 80px; }
.brand { display: flex; align-items: center; gap: 10px; }
.brand span { font-size: 29px; font-weight: 900; letter-spacing: .7px; padding-top: 1px; }
.account { display: flex; align-items: center; }
.komisi { width: 342px; height: 64px; border-radius: 16px; background: #e0ecfc; color: #007bff; display: flex; align-items: center; padding-left: 22px; gap: 22px; font-size: 31px; letter-spacing: .1px; margin-right: 48px; }
.round { width: 48px; height: 48px; }
.round + .round { margin-left: 48px; }
.body { flex: 1; min-height: 0; display: flex; background: #f2f9ff; }
.sidebar { width: 522px; background: #fff; border-right: 2px solid #dadce0; display: flex; flex-direction: column; font-size: 27px; letter-spacing: .38px; }
.back { height: 145px; border-bottom: 2px solid #dadce0; display: flex; align-items: center; padding: 16px 0 0 64px; gap: 24px; letter-spacing: .6px; }
.menu { padding: 32px 32px 0; }
.menu a { height: 96px; border-radius: 16px; display: flex; align-items: center; padding-left: 26px; gap: 18px; }
.menu a span { margin-top: -1px; }
.menu svg, .feedback svg { width: 28px; height: 28px; }
.menu .current { background: #eeebfb; color: #00149b; }
.dns-glyph { font: 800 11px Inter, sans-serif; letter-spacing: 0; fill: #007bff; }
.feedback { margin-top: auto; height: 162px; border-top: 2px solid #dadce0; display: flex; align-items: center; padding-left: 58px; gap: 18px; }
.content { width: 2323px; padding: 0 63px 0 62px; overflow: hidden; }
.card { background: #fff; border: 2px solid #dadce0; border-radius: 16px; }
.subtabs { height: 100px; margin-top: -42px; display: flex; padding-left: 16px; color: #6d7081; font-weight: 700; letter-spacing: .85px; }
.subtabs a { line-height: 96px; padding: 0 48px; height: 98px; }
.subtabs .on { color: #007bff; border-bottom: 4px solid #007bff; width: 252px; }
.ns { margin-top: 40px; height: 682px; padding: 32px 48px 0; }
h2 { font-size: 31px; font-weight: 700; line-height: 48px; letter-spacing: .15px; }
.para { margin-top: 22px; color: #6d7081; line-height: 48px; letter-spacing: .58px; }
.spread { display: flex; justify-content: space-between; width: 2027px; }
.para.one .spread { width: 1796px; }
.ns-list { margin-top: 32px; height: 272px; background: #f2f3f6; border-radius: 16px; padding: 7px 32px; font-weight: 700; color: #6d7081; line-height: 64px; letter-spacing: .75px; }
.primary { display: block; margin-top: 46px; height: 84px; width: 342px; border-radius: 16px; background: #007bff; color: #fff; font-weight: 700; letter-spacing: 1.05px; text-align: left; padding-left: 49px; }
.records { margin-top: 48px; height: 311px; padding: 32px 48px 0; }
.alert { margin-top: 33px; height: 92px; border: 2px solid #ff9d0a; border-radius: 16px; background: #fffae4; display: flex; align-items: center; padding-left: 40px; gap: 28px; letter-spacing: .55px; }
.alert p { margin-top: -2px; }
.scrollbar { width: 35px; background: #ececec; display: flex; flex-direction: column; align-items: center; padding: 12px 0 14px; }
.thumb { width: 30px; height: 1022px; margin: 165px 0 auto; background: #c1c1c1; }
.chat { position: absolute; left: 2744px; top: 1326px; width: 96px; height: 96px; border-radius: 50%; background: #4c20cf; display: grid; place-items: center; }

/* Dialog */
.overlay { position: absolute; inset: 0; background: linear-gradient(90deg, transparent 2840px, rgba(0,0,0,.16)), rgba(0,0,0,.5); display: flex; justify-content: center; align-items: flex-start; padding-top: 242px; }
.modal { width: 1000px; height: 930px; background: #fff; border: 2px solid #dadce0; border-radius: 32px; padding: 62px 80px 0; color: #6d7081; letter-spacing: .6px; }
h1 { font-size: 39px; line-height: 64px; font-weight: 700; color: #1d1e20; letter-spacing: .2px; }
.sub { line-height: 48px; margin-top: 17px; }
.fields { margin-top: 48px; display: grid; gap: 16px; }
.fields li { height: 84px; border: 2px solid #dadce0; border-radius: 16px; background: #f2f3f6; font-weight: 700; line-height: 80px; padding-left: 32px; letter-spacing: .75px; }
.note { display: flex; align-items: center; margin-top: 32px; gap: 16px; line-height: 48px; letter-spacing: .7px; }
.note svg { margin-top: -3px; }
.actions { display: flex; justify-content: flex-end; margin-top: 64px; padding-right: 15px; }
.text-button { color: #007bff; font-weight: 700; line-height: 48px; letter-spacing: 1.1px; }

/* Taskbar */
.taskbar { flex: 1; border-top: 2px solid #bfb0b5; display: flex; align-items: center; padding-left: 840px; background: linear-gradient(90deg, #ecdae9 0, #e9d8e8 40px, #dbdce3 165px, #dadae1 370px, #e5d4e4 480px, #ebd5dd 560px, #efd6dc 950px, #ebd5dc 1190px, #dad9da 1300px, #ead6db 1400px, #f0d6dc 1920px, #ead5dc 2200px, #e4d3e6 2280px, #dadae0 2400px, #dadada 2640px, #ebd5de 2750px, #f1d4dc 2880px); font-family: "Open Sans", sans-serif; }
.dock { display: flex; align-items: center; height: 94px; }
.search { margin: 0 5px 0 29px; width: 437px; height: 62px; border-radius: 31px; background: #f9f4f6; border-bottom: 2px solid #c9b8bd; box-shadow: 0 0 0 1px #e0cdd3; display: flex; align-items: center; padding: 0 11px 0 21px; color: #5c5a5b; font-size: 26px; }
.search span { margin-left: 19px; }
.isle { margin-left: auto; }
.app { width: 88px; height: 94px; display: grid; place-items: center; position: relative; }
.app.run::after { content: ""; position: absolute; bottom: 10px; left: 38px; width: 12px; height: 6px; border-radius: 3px; background: #867b80; }
.app.focus::before { content: ""; position: absolute; left: 6px; top: 8px; width: 76px; height: 76px; border-radius: 8px; background: #f7eaed; box-shadow: 0 1px 2px #cdb9bf; z-index: 0; }
.app svg { position: relative; }
.app.focus::after { background: #24828f; width: 32px; left: 28px; }
.tray { margin-left: auto; display: flex; align-items: center; padding-right: 43px; }
.cloud { margin-left: 37px; }
.sync { margin-left: 31px; }
.wifi { margin-left: 30px; }
.vol { margin-left: 16px; }
.bat { margin-left: 14px; margin-top: -4px; }
.clock { margin: -2px 0 0 31px; width: 124px; text-align: right; font-size: 24px; line-height: 32px; letter-spacing: -.35px; color: #111; direction: ltr; }
.bell { margin-left: 18px; }
```
